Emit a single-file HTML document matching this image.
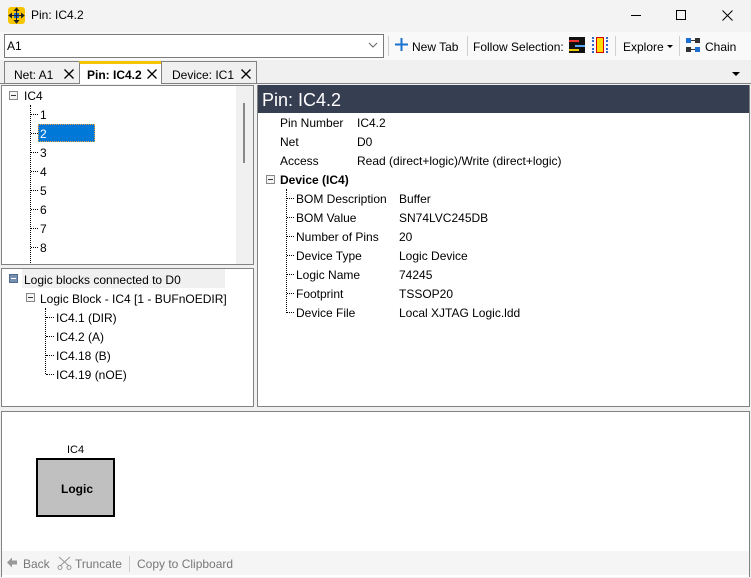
<!DOCTYPE html>
<html><head><style>
*{margin:0;padding:0;box-sizing:border-box}
body{width:751px;height:578px;overflow:hidden;background:#f0f0f0;font-family:"Liberation Sans",sans-serif;font-size:12px;color:#000;position:relative}
.a{position:absolute;white-space:nowrap}
.t{position:absolute;white-space:nowrap;line-height:16px;margin-top:1px}
.box{position:absolute;background:#fff;border:1px solid #828282}
.dv{position:absolute;border-left:1px dotted #000}
.dh{position:absolute;border-top:1px dotted #000}
.pm{position:absolute;width:9px;height:9px;border:1px solid #888;background:#f4f4f4}
.pm:after{content:"";position:absolute;left:1px;top:3px;width:5px;height:1px;background:#333}
.sep{position:absolute;width:1px;background:#d0d0d0}
</style></head><body>
<div class="a" style="left:0;top:0;width:751px;height:32px;background:#f3f3f3"></div>
<div class="a" style="left:8px;top:7px;width:17px;height:17px;background:#f7c600;border-radius:3px"></div>
<svg class="a" style="left:8px;top:7px" width="17" height="17"><rect x="6" y="6" width="5" height="5" fill="#1c6fd1"/><path d="M8.5 2v13M2 8.5h13M8.5 1l-2 2.5h4zM8.5 16l-2-2.5h4zM1 8.5l2.5-2v4zM16 8.5l-2.5-2v4z" stroke="#222" fill="#222" stroke-width="1"/></svg>
<div class="t" style="left:31px;top:6px">Pin: IC4.2</div>
<div class="a" style="left:631px;top:15px;width:10px;height:1px;background:#000"></div>
<div class="a" style="left:676px;top:10px;width:10px;height:10px;border:1px solid #000"></div>
<svg class="a" style="left:722px;top:10px" width="11" height="11"><path d="M0.5 0.5l10 10M10.5 0.5l-10 10" stroke="#000" stroke-width="1"/></svg>
<div class="a" style="left:0;top:32px;width:751px;height:28px;background:#f9f9f9"></div>
<div class="a" style="left:4px;top:34px;width:380px;height:24px;background:#fff;border:1px solid #7a7a7a"></div>
<div class="t" style="left:7px;top:37px">A1</div>
<svg class="a" style="left:368px;top:42px" width="10" height="6"><path d="M1 1l4 4 4-4" stroke="#666" fill="none"/></svg>
<div class="sep" style="left:388px;top:36px;height:20px"></div>
<svg class="a" style="left:395px;top:38px" width="13" height="13"><path d="M6.5 0v13M0 6.5h13" stroke="#1a73d0" stroke-width="2"/></svg>
<div class="t" style="left:412px;top:38px">New Tab</div>
<div class="sep" style="left:467px;top:36px;height:20px"></div>
<div class="t" style="left:473px;top:38px">Follow Selection:</div>
<div class="a" style="left:569px;top:37px;width:16px;height:16px;background:#111"></div>
<div class="a" style="left:569px;top:40px;width:10px;height:2px;background:#e33"></div>
<div class="a" style="left:575px;top:45px;width:10px;height:2px;background:#5af"></div>
<div class="a" style="left:569px;top:49px;width:10px;height:2px;background:#ec0"></div>
<div class="a" style="left:592px;top:37px;width:16px;height:16px;border-left:2px dotted #36c;border-right:2px dotted #36c"></div>
<div class="a" style="left:596px;top:37px;width:8px;height:16px;background:#fd0;border:1px solid #d00"></div>
<div class="sep" style="left:615px;top:36px;height:20px"></div>
<div class="t" style="left:623px;top:38px">Explore</div>
<div class="a" style="left:667px;top:45px;border:3px solid transparent;border-top:3px solid #000"></div>
<div class="sep" style="left:679px;top:36px;height:20px"></div>
<div class="a" style="left:686px;top:38px;width:5px;height:5px;background:#1c6fd1"></div>
<div class="a" style="left:695px;top:38px;width:5px;height:5px;background:#333"></div>
<div class="a" style="left:686px;top:47px;width:5px;height:5px;background:#333"></div>
<div class="a" style="left:695px;top:47px;width:5px;height:5px;background:#1c6fd1"></div>
<div class="a" style="left:691px;top:40px;width:4px;height:1px;background:#333"></div>
<div class="a" style="left:691px;top:49px;width:4px;height:1px;background:#333"></div>
<div class="t" style="left:705px;top:38px">Chain</div>
<div class="a" style="left:0;top:83px;width:751px;height:1px;background:#828282"></div>
<div class="a" style="left:4px;top:61px;width:76px;height:23px;background:#f0f0f0;border:1px solid #828282"></div>
<div class="t" style="left:14px;top:66px">Net: A1</div>
<svg class="a" style="left:64px;top:69px" width="10" height="10"><path d="M0.5 0.5l9 9M9.5 0.5l-9 9" stroke="#000" stroke-width="1.3"/></svg>
<div class="a" style="left:79px;top:61px;width:83px;height:23px;background:#fff;border:1px solid #828282;border-top:3px solid #f5c400;border-bottom:none"></div>
<div class="t" style="left:87px;top:66px;font-weight:bold">Pin: IC4.2</div>
<svg class="a" style="left:147px;top:69px" width="10" height="10"><path d="M0.5 0.5l9 9M9.5 0.5l-9 9" stroke="#000" stroke-width="1.3"/></svg>
<div class="a" style="left:161px;top:61px;width:96px;height:23px;background:#f0f0f0;border:1px solid #828282"></div>
<div class="t" style="left:172px;top:66px">Device: IC1</div>
<svg class="a" style="left:241px;top:69px" width="10" height="10"><path d="M0.5 0.5l9 9M9.5 0.5l-9 9" stroke="#000" stroke-width="1.3"/></svg>
<div class="a" style="left:732px;top:72px;border:4px solid transparent;border-top:4px solid #000"></div>
<div class="box" style="left:1px;top:85px;width:253px;height:180px"></div>
<div class="a" style="left:236px;top:86px;width:17px;height:178px;background:#f0f0f0"></div>
<div class="a" style="left:243px;top:103px;width:2px;height:60px;background:#888"></div>
<div class="pm" style="left:9px;top:91px"></div>
<div class="t" style="left:24px;top:87px">IC4</div>
<div class="dv" style="left:30px;top:105px;height:158px"></div>
<div class="a" style="left:38px;top:124px;width:57px;height:18px;background:#0078d7;border:1px dotted #e8a040"></div>
<div class="dh" style="left:31px;top:114px;width:7px"></div><div class="t" style="left:40px;top:106px">1</div>
<div class="dh" style="left:31px;top:133px;width:7px"></div><div class="t" style="left:40px;top:125px;color:#fff">2</div>
<div class="dh" style="left:31px;top:152px;width:7px"></div><div class="t" style="left:40px;top:144px">3</div>
<div class="dh" style="left:31px;top:171px;width:7px"></div><div class="t" style="left:40px;top:163px">4</div>
<div class="dh" style="left:31px;top:190px;width:7px"></div><div class="t" style="left:40px;top:182px">5</div>
<div class="dh" style="left:31px;top:209px;width:7px"></div><div class="t" style="left:40px;top:201px">6</div>
<div class="dh" style="left:31px;top:228px;width:7px"></div><div class="t" style="left:40px;top:220px">7</div>
<div class="dh" style="left:31px;top:247px;width:7px"></div><div class="t" style="left:40px;top:239px">8</div>
<div class="box" style="left:1px;top:268px;width:253px;height:139px"></div>
<div class="a" style="left:22px;top:269px;width:203px;height:19px;background:#f0f0f0"></div>
<div class="a" style="left:9px;top:274px;width:9px;height:9px;background:#7890b0;border:1px solid #506a90"></div>
<div class="a" style="left:11px;top:278px;width:5px;height:1px;background:#fff"></div>
<div class="t" style="left:24px;top:271px">Logic blocks connected to D0</div>
<div class="pm" style="left:26px;top:293px"></div>
<div class="t" style="left:40px;top:290px">Logic Block - IC4 [1 - BUFnOEDIR]</div>
<div class="dv" style="left:45px;top:308px;height:66px"></div>
<div class="dh" style="left:46px;top:317px;width:8px"></div><div class="t" style="left:56px;top:309px">IC4.1 (DIR)</div>
<div class="dh" style="left:46px;top:336px;width:8px"></div><div class="t" style="left:56px;top:328px">IC4.2 (A)</div>
<div class="dh" style="left:46px;top:355px;width:8px"></div><div class="t" style="left:56px;top:347px">IC4.18 (B)</div>
<div class="dh" style="left:46px;top:374px;width:8px"></div><div class="t" style="left:56px;top:366px">IC4.19 (nOE)</div>
<div class="box" style="left:257px;top:85px;width:493px;height:322px"></div>
<div class="a" style="left:258px;top:85px;width:491px;height:28px;background:#363e51"></div>
<div class="t" style="left:262px;top:88px;color:#fff;font-size:18px;line-height:22px">Pin: IC4.2</div>
<div class="t" style="left:280px;top:114px">Pin Number</div><div class="t" style="left:357px;top:114px">IC4.2</div>
<div class="t" style="left:280px;top:133px">Net</div><div class="t" style="left:357px;top:133px">D0</div>
<div class="t" style="left:280px;top:152px">Access</div><div class="t" style="left:357px;top:152px">Read (direct+logic)/Write (direct+logic)</div>
<div class="pm" style="left:266px;top:175px"></div>
<div class="t" style="left:280px;top:171px;font-weight:bold">Device (IC4)</div>
<div class="dv" style="left:286px;top:189px;height:124px"></div>
<div class="dh" style="left:287px;top:198px;width:7px"></div><div class="t" style="left:296px;top:190px">BOM Description</div><div class="t" style="left:399px;top:190px">Buffer</div>
<div class="dh" style="left:287px;top:217px;width:7px"></div><div class="t" style="left:296px;top:209px">BOM Value</div><div class="t" style="left:399px;top:209px">SN74LVC245DB</div>
<div class="dh" style="left:287px;top:236px;width:7px"></div><div class="t" style="left:296px;top:228px">Number of Pins</div><div class="t" style="left:399px;top:228px">20</div>
<div class="dh" style="left:287px;top:255px;width:7px"></div><div class="t" style="left:296px;top:247px">Device Type</div><div class="t" style="left:399px;top:247px">Logic Device</div>
<div class="dh" style="left:287px;top:274px;width:7px"></div><div class="t" style="left:296px;top:266px">Logic Name</div><div class="t" style="left:399px;top:266px">74245</div>
<div class="dh" style="left:287px;top:293px;width:7px"></div><div class="t" style="left:296px;top:285px">Footprint</div><div class="t" style="left:399px;top:285px">TSSOP20</div>
<div class="dh" style="left:287px;top:312px;width:7px"></div><div class="t" style="left:296px;top:304px">Device File</div><div class="t" style="left:399px;top:304px">Local XJTAG Logic.ldd</div>
<div class="box" style="left:1px;top:411px;width:749px;height:166px;border-bottom:none"></div>
<div class="t" style="left:67px;top:441px;font-size:11px">IC4</div>
<div class="a" style="left:36px;top:458px;width:79px;height:59px;background:#c0c0c0;border:2px solid #000"></div>
<div class="t" style="left:61px;top:480px;font-weight:bold">Logic</div>
<div class="a" style="left:2px;top:551px;width:747px;height:24px;background:#f5f5f5"></div>
<svg class="a" style="left:6px;top:557px" width="12" height="11"><path d="M1 5.5l5-5v3h5v4H6v3z" fill="#999"/></svg>
<div class="t" style="left:23px;top:555px;color:#777">Back</div>
<svg class="a" style="left:57px;top:556px" width="15" height="14"><path d="M2 1l10 9M13 1L3 10" stroke="#999" fill="none"/><circle cx="3" cy="11.5" r="2" stroke="#999" fill="none"/><circle cx="12" cy="11.5" r="2" stroke="#999" fill="none"/></svg>
<div class="t" style="left:75px;top:555px;color:#777">Truncate</div>
<div class="sep" style="left:129px;top:556px;height:16px"></div>
<div class="t" style="left:137px;top:555px;color:#777">Copy to Clipboard</div>
</body></html>
